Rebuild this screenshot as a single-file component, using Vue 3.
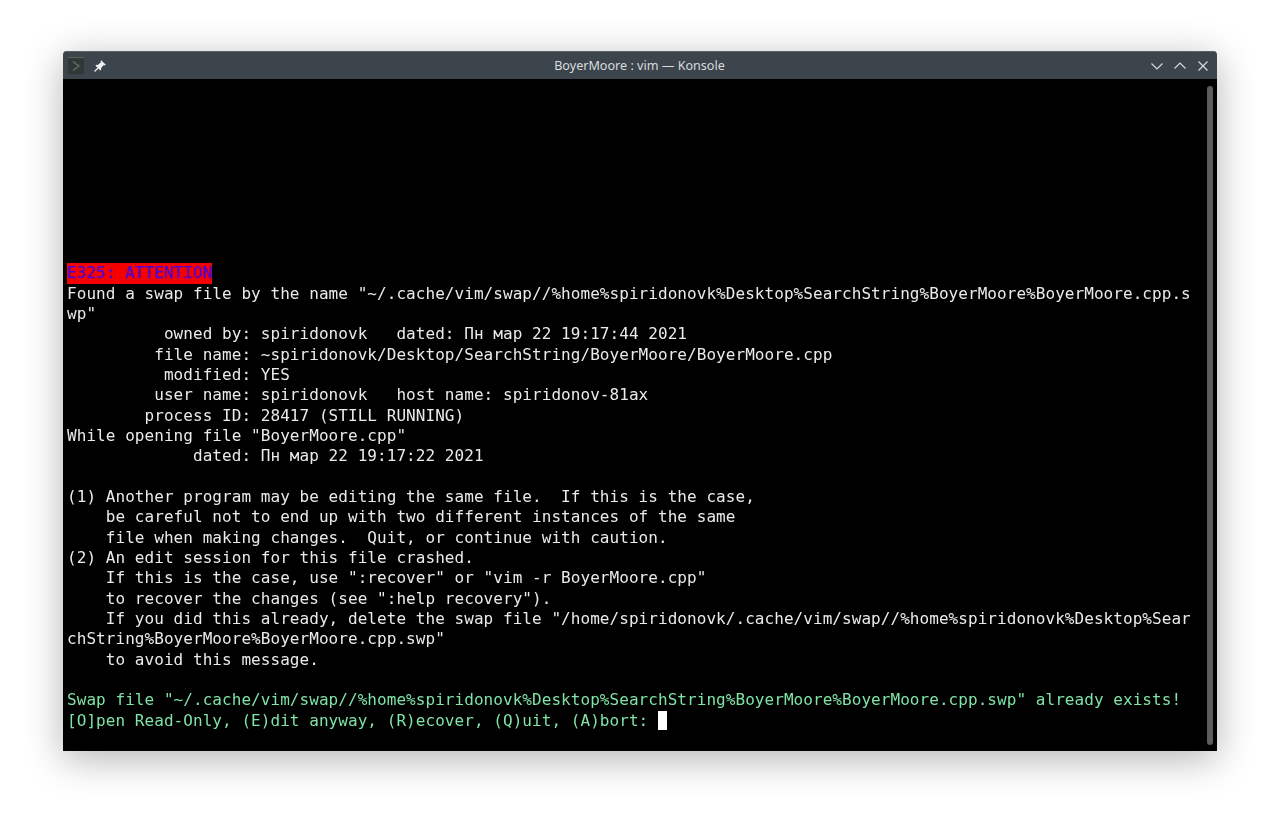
<script setup>
const rows = [
  'Found a swap file by the name "~/.cache/vim/swap//%home%spiridonovk%Desktop%SearchString%BoyerMoore%BoyerMoore.cpp.s',
  'wp"',
  '          owned by: spiridonovk   dated: Пн мар 22 19:17:44 2021',
  '         file name: ~spiridonovk/Desktop/SearchString/BoyerMoore/BoyerMoore.cpp',
  '          modified: YES',
  '         user name: spiridonovk   host name: spiridonov-81ax',
  '        process ID: 28417 (STILL RUNNING)',
  'While opening file "BoyerMoore.cpp"',
  '             dated: Пн мар 22 19:17:22 2021',
  ' ',
  '(1) Another program may be editing the same file.  If this is the case,',
  '    be careful not to end up with two different instances of the same',
  '    file when making changes.  Quit, or continue with caution.',
  '(2) An edit session for this file crashed.',
  '    If this is the case, use ":recover" or "vim -r BoyerMoore.cpp"',
  '    to recover the changes (see ":help recovery").',
  '    If you did this already, delete the swap file "/home/spiridonovk/.cache/vim/swap//%home%spiridonovk%Desktop%Sear',
  'chString%BoyerMoore%BoyerMoore.cpp.swp"',
  '    to avoid this message.',
  ' '
]
</script>

<template>
  <div class="desktop">
    <div class="window">
      <header class="titlebar">
        <div class="left-icons">
          <span class="app-icon">
            <svg width="14" height="14" viewBox="0 0 14 14"><path d="M4 2.5 10 7l-6 4.5" fill="none" stroke="#59625f" stroke-width="1.6"/></svg>
          </span>
          <svg class="pin" width="14" height="14" viewBox="0 0 14 14">
            <path d="M8.2 1.2 12.8 5.800 11.800 6.500 10.800 6 8 9.300 8.200 10.800 7.300 11.500 2.500 6.700 3.200 5.800 4.700 6 8 3.200 7.500 2.200Z" fill="#eef0f1"/>
            <path d="M5 9 1.500 12.500" stroke="#eef0f1" stroke-width="1.300"/>
          </svg>
        </div>
        <div class="title">BoyerMoore : vim — Konsole</div>
        <div class="controls">
          <svg width="14" height="14" viewBox="0 0 14 14"><path d="M1.500 4.500 7 10l5.500-5.500" fill="none" stroke="#d5d9dc" stroke-width="1.200"/></svg>
          <svg width="14" height="14" viewBox="0 0 14 14"><path d="M1.500 9.500 7 4l5.500 5.500" fill="none" stroke="#d5d9dc" stroke-width="1.200"/></svg>
          <svg width="14" height="14" viewBox="0 0 14 14"><path d="M2.500 2.500l9 9m0-9-9 9" fill="none" stroke="#d5d9dc" stroke-width="1.300"/></svg>
        </div>
      </header>
      <div class="terminal">
        <main class="screen">
          <div class="row"><span class="error">E325: ATTENTION</span></div>
          <div v-for="(r, i) in rows" :key="i" class="row">{{ r }}</div>
          <div class="row green">Swap file "~/.cache/vim/swap//%home%spiridonovk%Desktop%SearchString%BoyerMoore%BoyerMoore.cpp.swp" already exists!</div>
          <div class="row green">[O]pen Read-Only, (E)dit anyway, (R)ecover, (Q)uit, (A)bort: <span class="cursor"></span></div>
        </main>
        <div class="scrollbar"><div class="thumb"></div></div>
      </div>
    </div>
  </div>
</template>

<style>
html, body { margin: 0; background: #fff; }
</style>

<style scoped>
.desktop {
  width: 1280px;
  height: 826px;
  box-sizing: border-box;
  padding: 51px 63px 75px;
  background: #fff;
  overflow: hidden;
}
.window {
  height: 100%;
  display: flex;
  flex-direction: column;
  border-radius: 4px 4px 0 0;
  overflow: hidden;
  box-shadow: 0 8px 38px rgba(0, 0, 0, 0.3);
}
.titlebar {
  height: 28px;
  flex: none;
  background: #3c444c;
  border-top: 1px solid #5a6168;
  box-sizing: border-box;
  display: grid;
  grid-template-columns: 1fr auto 1fr;
  align-items: center;
  font-family: "Noto Sans", sans-serif;
  font-size: 12.6px;
  color: #d9dcde;
  padding: 0 7px 0 6px;
}
.left-icons { display: flex; align-items: center; gap: 9px; margin-left: -1px; }
.app-icon {
  width: 16px;
  height: 17px;
  background: #2f3836;
  border-top: 1px solid #5b6361;
  box-sizing: border-box;
  display: flex;
  align-items: center;
  justify-content: center;
}
.controls { display: flex; justify-content: flex-end; gap: 9px; }
.terminal {
  flex: 1;
  display: flex;
  background: #000;
  min-height: 0;
}
.screen {
  flex: 1;
  display: flex;
  flex-direction: column;
  justify-content: flex-end;
  padding: 0 0 20px 4px;
  font-family: "DejaVu Sans Mono", monospace;
  font-size: 16px;
  letter-spacing: 0.055px;
  color: #e9eaeb;
  min-width: 0;
  filter: blur(0.35px);
}
.row {
  height: 20.33px;
  line-height: 20.33px;
  white-space: pre;
}
.error {
  background: #f40000;
  color: #4a00d8;
  -webkit-text-stroke: 0.25px #4a00d8;
  display: inline-block;
  height: 20.33px;
  vertical-align: top;
}
.green { color: #7fe3a6; }
.cursor {
  display: inline-block;
  width: 9px;
  height: 19px;
  background: #fff;
  vertical-align: top;
}
.scrollbar {
  width: 12px;
  flex: none;
  padding: 7px 0 6px 2px;
  box-sizing: border-box;
}
.thumb {
  width: 6px;
  height: 100%;
  background: #5c5c5e;
  border-radius: 3px;
}
</style>
